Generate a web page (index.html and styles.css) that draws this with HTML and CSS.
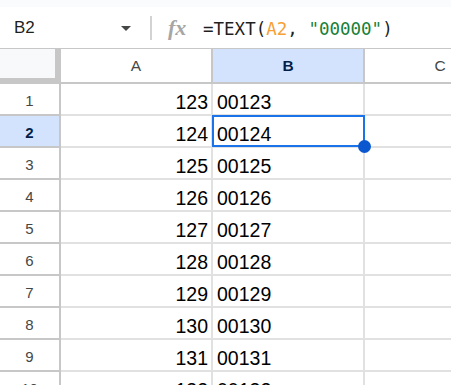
FILE: index.html
```html
<!DOCTYPE html>
<html lang="en">
<head>
    <meta charset="UTF-8">
    <title>TEXT formula</title>
    <link rel="stylesheet" href="styles.css">
</head>
<body>

<div class="top-strip"></div>

<div class="formula-bar">
    <div class="name-box">
        <span class="cell-ref">B2</span>
        <span class="caret"></span>
    </div>
    <div class="divider"></div>
    <span class="fx">fx</span>
    <div class="formula">=TEXT(<span class="ref">A2</span>, <span class="str">"00000"</span>)</div>
</div>

<div class="sheet">
    <!-- header row -->
    <div class="corner"></div>
    <div class="col-head">A</div>
    <div class="col-head active">B</div>
    <div class="col-head">C</div>

    <div class="row-head">1</div>
    <div class="cell num">123</div>
    <div class="cell">00123</div>
    <div class="cell"></div>

    <div class="row-head active">2</div>
    <div class="cell num">124</div>
    <div class="cell selected">00124
        <div class="selection"><span class="fill-handle"></span></div>
    </div>
    <div class="cell"></div>

    <div class="row-head">3</div>
    <div class="cell num">125</div>
    <div class="cell">00125</div>
    <div class="cell"></div>

    <div class="row-head">4</div>
    <div class="cell num">126</div>
    <div class="cell">00126</div>
    <div class="cell"></div>

    <div class="row-head">5</div>
    <div class="cell num">127</div>
    <div class="cell">00127</div>
    <div class="cell"></div>

    <div class="row-head">6</div>
    <div class="cell num">128</div>
    <div class="cell">00128</div>
    <div class="cell"></div>

    <div class="row-head">7</div>
    <div class="cell num">129</div>
    <div class="cell">00129</div>
    <div class="cell"></div>

    <div class="row-head">8</div>
    <div class="cell num">130</div>
    <div class="cell">00130</div>
    <div class="cell"></div>

    <div class="row-head">9</div>
    <div class="cell num">131</div>
    <div class="cell">00131</div>
    <div class="cell"></div>

    <div class="row-head">10</div>
    <div class="cell num">132</div>
    <div class="cell">00132</div>
    <div class="cell"></div>
</div>

</body>
</html>
```

FILE: styles.css
```css
body {
    margin: 0;
    width: 451px;
    height: 385px;
    overflow: hidden;
    background: #fff;
    font-family: "Liberation Sans", Arial, sans-serif;
    color: #000;
}

.top-strip {
    height: 7px;
    background: #f9fbfd;
}

/* formula bar */
.formula-bar {
    height: 41px;
    border-bottom: 1px solid #c7c7c7;
    display: flex;
    align-items: center;
}

.name-box {
    width: 141px;
    box-sizing: border-box;
    padding: 0 10px 0 14px;
    display: flex;
    align-items: center;
    justify-content: space-between;
}

.cell-ref {
    font-size: 17px;
    color: #1f1f1f;
}

.caret {
    width: 0;
    height: 0;
    border-left: 5px solid transparent;
    border-right: 5px solid transparent;
    border-top: 5px solid #444746;
    margin-top: 1px;
}

.divider {
    width: 2px;
    height: 24px;
    margin-left: 9px;
    background: #d3d3d3;
}

.fx {
    margin-left: 16px;
    width: 20px;
    font-family: "Liberation Serif", serif;
    font-style: italic;
    font-weight: bold;
    font-size: 22px;
    color: #a6a6a6;
}

.formula {
    margin-left: 15px;
    padding-top: 3px;
    font-family: "DejaVu Sans Mono", monospace;
    font-size: 17.5px;
    color: #1f1f1f;
    white-space: pre;
}

.formula .ref {
    color: #f7a035;
}

.formula .str {
    color: #188038;
}

/* grid */
.sheet {
    display: grid;
    grid-template-columns: 61px 152px 152px 152px;
    grid-template-rows: 35px;
    grid-auto-rows: 32px;
}

.corner {
    background: #f8f9fa;
    border-right: 6px solid #c7c7c7;
    border-bottom: 6px solid #c7c7c7;
}

.col-head {
    border-right: 2px solid #c7c7c7;
    border-bottom: 2px solid #c7c7c7;
    display: flex;
    align-items: center;
    justify-content: center;
    font-size: 15.5px;
    color: #444746;
    padding-top: 1px;
}

.col-head.active {
    background: #d3e3fd;
    color: #041e49;
    font-weight: bold;
}

.row-head {
    border-right: 2px solid #c7c7c7;
    border-bottom: 2px solid #c7c7c7;
    display: flex;
    align-items: center;
    justify-content: center;
    padding-top: 2px;
    font-size: 15px;
    color: #444746;
}

.row-head.active {
    background: #d3e3fd;
    color: #041e49;
    font-weight: bold;
}

.sheet > div {
    box-sizing: border-box;
}

.cell {
    border-right: 2px solid #e1e1e1;
    border-bottom: 2px solid #e1e1e1;
    display: flex;
    align-items: flex-end;
    padding: 0 3px 2px 4px;
    font-size: 19.5px;
    line-height: 1;
}

.cell.num {
    justify-content: flex-end;
}

.cell.selected {
    position: relative;
}

.selection {
    position: absolute;
    top: -1px;
    left: -1px;
    right: -2px;
    bottom: -1px;
    border: 2px solid #1a73e8;
}

.fill-handle {
    position: absolute;
    right: -8px;
    bottom: -8px;
    width: 13px;
    height: 13px;
    border-radius: 50%;
    background: #0b57d0;
}
```
